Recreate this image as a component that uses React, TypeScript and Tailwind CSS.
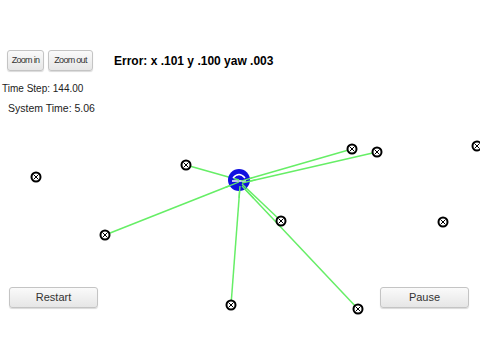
import React from "react";

const landmarks: [number, number][] = [
  [36, 177],
  [105, 235],
  [186, 165],
  [231, 305],
  [281, 221],
  [352, 149],
  [377, 152],
  [358, 309],
  [443, 222],
  [477, 146],
];

const rays: [number, number, number, number][] = [
  [239, 180, 186, 165],
  [239, 182, 105, 235],
  [241, 181, 352, 149],
  [242, 183, 377, 152],
  [242, 184, 281, 221],
  [240, 186, 231, 305],
  [242, 186, 358, 309],
];

const Landmark = ({ x, y }: { x: number; y: number }) => (
  <g>
    <circle cx={x} cy={y} r={4.5} fill="white" stroke="black" strokeWidth={2} />
    <line x1={x - 2.5} y1={y - 2.5} x2={x + 2.5} y2={y + 2.5} stroke="black" strokeWidth={1} />
    <line x1={x - 2.5} y1={y + 2.5} x2={x + 2.5} y2={y - 2.5} stroke="black" strokeWidth={1} />
  </g>
);

const Btn = ({ label, className }: { label: string; className: string }) => (
  <button
    className={`h-[21px] rounded-[3px] border border-[#c4c4c4] bg-gradient-to-b from-[#fafafa] to-[#e6e6e6] text-[#333] shadow-[0_1px_1px_rgba(0,0,0,0.15)] ${className}`}
  >
    {label}
  </button>
);

export default function App() {
  return (
    <div className="relative w-[480px] h-[360px] overflow-hidden bg-white font-['Liberation_Sans',Arial,sans-serif]">
      <svg className="absolute inset-0" width={480} height={360}>
        {rays.map(([x1, y1, x2, y2], i) => (
          <line key={i} x1={x1} y1={y1} x2={x2} y2={y2} stroke="#66ee66" strokeWidth={1.5} />
        ))}
        <circle cx={239} cy={180} r={11} fill="#1010e0" />
        <path d="M233 178 Q239 171 245 178" fill="none" stroke="white" strokeWidth={1.5} />
        <line x1={232} y1={181} x2={246} y2={181} stroke="white" strokeWidth={1.5} />
        {rays.map(([x1, y1, x2, y2], i) => (
          <line key={"o" + i} x1={x1} y1={y1} x2={x1 + (x2 - x1) * 0.1} y2={y1 + (y2 - y1) * 0.1} stroke="#66ee66" strokeWidth={1.3} />
        ))}
        {landmarks.map(([x, y], i) => (
          <Landmark key={i} x={x} y={y} />
        ))}
      </svg>

      <div className="relative flex flex-col">
        <div className="flex items-center mt-[50px] ml-[7px]">
          <Btn label="Zoom in" className="w-[37px] text-[9px] tracking-[-0.7px]" />
          <Btn label="Zoom out" className="w-[45px] ml-[4px] text-[9px] tracking-[-0.7px]" />
          <div className="ml-[21px] text-[12px] font-bold text-black">Error: x .101 y .100 yaw .003</div>
        </div>
        <div className="mt-[11px] ml-[2px] text-[10px] leading-[13px] text-[#222]">Time Step: 144.00</div>
        <div className="mt-[7px] ml-[8px] text-[10.5px] leading-[13px] text-[#222]">System Time: 5.06</div>
        <div className="flex justify-between mt-[172px] px-[9px] pr-[11px]">
          <Btn label="Restart" className="w-[89px] text-[11px]" />
          <Btn label="Pause" className="w-[89px] text-[11px]" />
        </div>
      </div>
    </div>
  );
}
